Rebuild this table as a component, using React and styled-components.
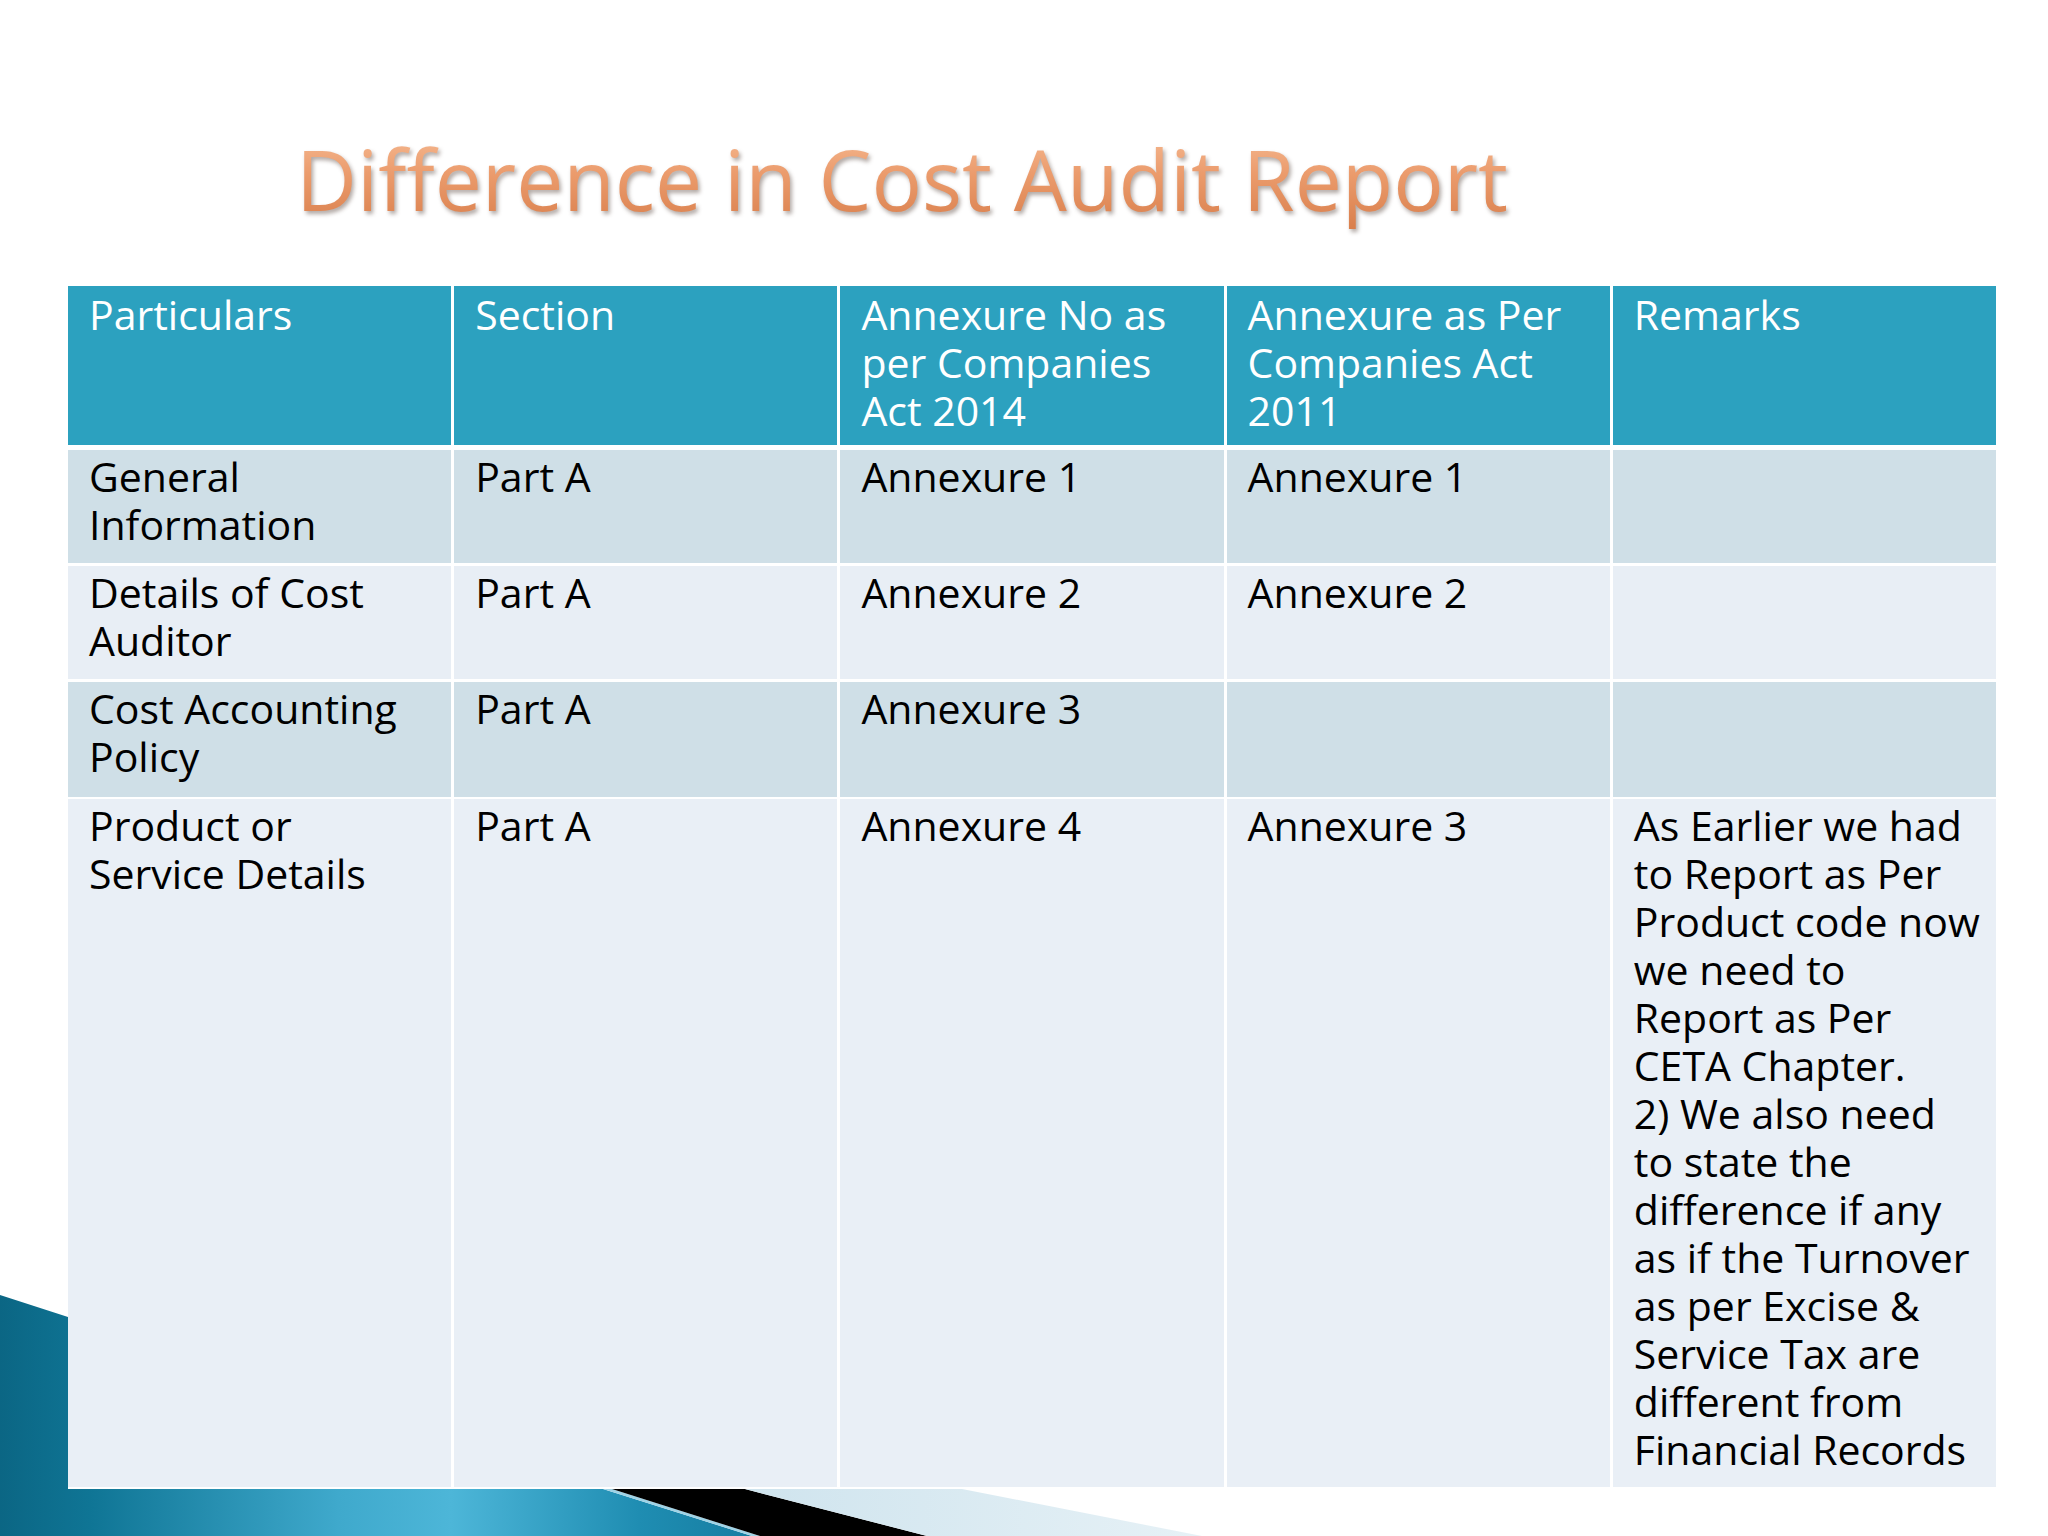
import React from 'react';
import styled, { createGlobalStyle } from 'styled-components';

const GlobalStyle = createGlobalStyle`
  html, body {
    margin: 0;
    padding: 0;
    background: #ffffff;
  }
  body {
    font-family: "Open Sans", "DejaVu Sans", sans-serif;
  }
`;

const Slide = styled.div`
  position: relative;
  width: 2048px;
  height: 1536px;
  overflow: hidden;
  background: #ffffff;
`;

const Backdrop = styled.svg`
  position: absolute;
  left: 0;
  top: 0;
  width: 2048px;
  height: 1536px;
  z-index: 0;
`;

const Content = styled.div`
  position: relative;
  z-index: 1;
  padding-top: 129px;
`;

const Title = styled.h1`
  margin: 0 0 57px 296px;
  font-family: "Open Sans", sans-serif;
  font-weight: 400;
  font-size: 84px;
  line-height: 100px;
  height: 100px;
  display: inline-block;
  background: linear-gradient(180deg, #f6bc95 0%, #eb9b6c 45%, #d97f4c 100%);
  -webkit-background-clip: text;
  background-clip: text;
  color: transparent;
  filter: drop-shadow(2px 3px 2px rgba(80, 60, 50, 0.45));
`;

const Table = styled.div`
  margin-left: 68px;
  width: 1928px;
  display: flex;
  flex-direction: column;
`;

const Row = styled.div`
  display: grid;
  grid-template-columns: repeat(5, 1fr);
  column-gap: 3px;
  height: ${p => p.$height}px;
  margin-top: ${p => p.$gap}px;
`;

const Cell = styled.div`
  background: ${p => p.$bg};
  color: ${p => (p.$head ? '#ffffff' : '#000000')};
  font-family: "Open Sans", sans-serif;
  font-weight: ${p => (p.$head ? 500 : 400)};
  font-size: 41px;
  line-height: 48px;
  padding: ${p => (p.$head ? '4px' : '2px')} 10px 0 21px;
  min-width: 0;
`;

const Line = styled.span`
  display: block;
  white-space: nowrap;
`;

const header = [
  ['Particulars'],
  ['Section'],
  ['Annexure No as', 'per Companies', 'Act 2014'],
  ['Annexure as Per', 'Companies Act', '2011'],
  ['Remarks'],
];

const rows = [
  {
    height: 113,
    gap: 5,
    bg: '#cfdfe7',
    cells: [['General', 'Information'], ['Part A'], ['Annexure 1'], ['Annexure 1'], []],
  },
  {
    height: 113,
    gap: 3,
    bg: '#e8eef5',
    cells: [['Details of Cost', 'Auditor'], ['Part A'], ['Annexure 2'], ['Annexure 2'], []],
  },
  {
    height: 115,
    gap: 3,
    bg: '#cfdfe7',
    cells: [['Cost Accounting', 'Policy'], ['Part A'], ['Annexure 3'], [], []],
  },
  {
    height: 688,
    gap: 2,
    bg: '#e9eff6',
    cells: [
      ['Product or', 'Service Details'],
      ['Part A'],
      ['Annexure 4'],
      ['Annexure 3'],
      [
        'As Earlier we had',
        'to Report as Per',
        'Product code now',
        'we need to',
        'Report as Per',
        'CETA Chapter.',
        '2) We also need',
        'to state the',
        'difference if any',
        'as if the Turnover',
        'as per Excise &',
        'Service Tax are',
        'different from',
        'Financial Records',
      ],
    ],
  },
];

const Decoration = () => (
  <Backdrop viewBox="0 0 2048 1536" aria-hidden="true">
    <defs>
      <linearGradient id="tealBand" x1="0" y1="0" x2="1" y2="0">
        <stop offset="0" stopColor="#0b6684" />
        <stop offset="0.12" stopColor="#0f7595" />
        <stop offset="0.45" stopColor="#3fa9cc" />
        <stop offset="0.6" stopColor="#4db6d8" />
        <stop offset="0.85" stopColor="#1f8db2" />
        <stop offset="1" stopColor="#167ea2" />
      </linearGradient>
      <linearGradient id="paleBand" x1="0" y1="0" x2="1" y2="0">
        <stop offset="0" stopColor="#cfe4ee" />
        <stop offset="1" stopColor="#e6f1f6" />
      </linearGradient>
    </defs>
    <polygon points="0,1295 68,1317 68,1489 603,1489 752,1536 0,1536" fill="url(#tealBand)" />
    <polygon points="603,1489 612,1489 760,1536 752,1536" fill="#9fd3e6" />
    <polygon points="612,1489 745,1489 927,1536 760,1536" fill="#000000" />
    <polygon points="745,1489 962,1489 1202,1536 927,1536" fill="url(#paleBand)" />
  </Backdrop>
);

const App = () => {
  return (
    <Slide>
      <GlobalStyle />
      <Decoration />
      <Content>
        <Title>Difference in Cost Audit Report</Title>
        <Table>
          <Row $height={159} $gap={0}>
            {header.map((lines, i) => (
              <Cell key={i} $head $bg="#2ca1bf">
                {lines.map(l => (
                  <Line key={l}>{l}</Line>
                ))}
              </Cell>
            ))}
          </Row>
          {rows.map((row, r) => (
            <Row key={r} $height={row.height} $gap={row.gap}>
              {row.cells.map((lines, i) => (
                <Cell key={i} $bg={row.bg}>
                  {lines.map(l => (
                    <Line key={l}>{l}</Line>
                  ))}
                </Cell>
              ))}
            </Row>
          ))}
        </Table>
      </Content>
    </Slide>
  );
};

export default App;
